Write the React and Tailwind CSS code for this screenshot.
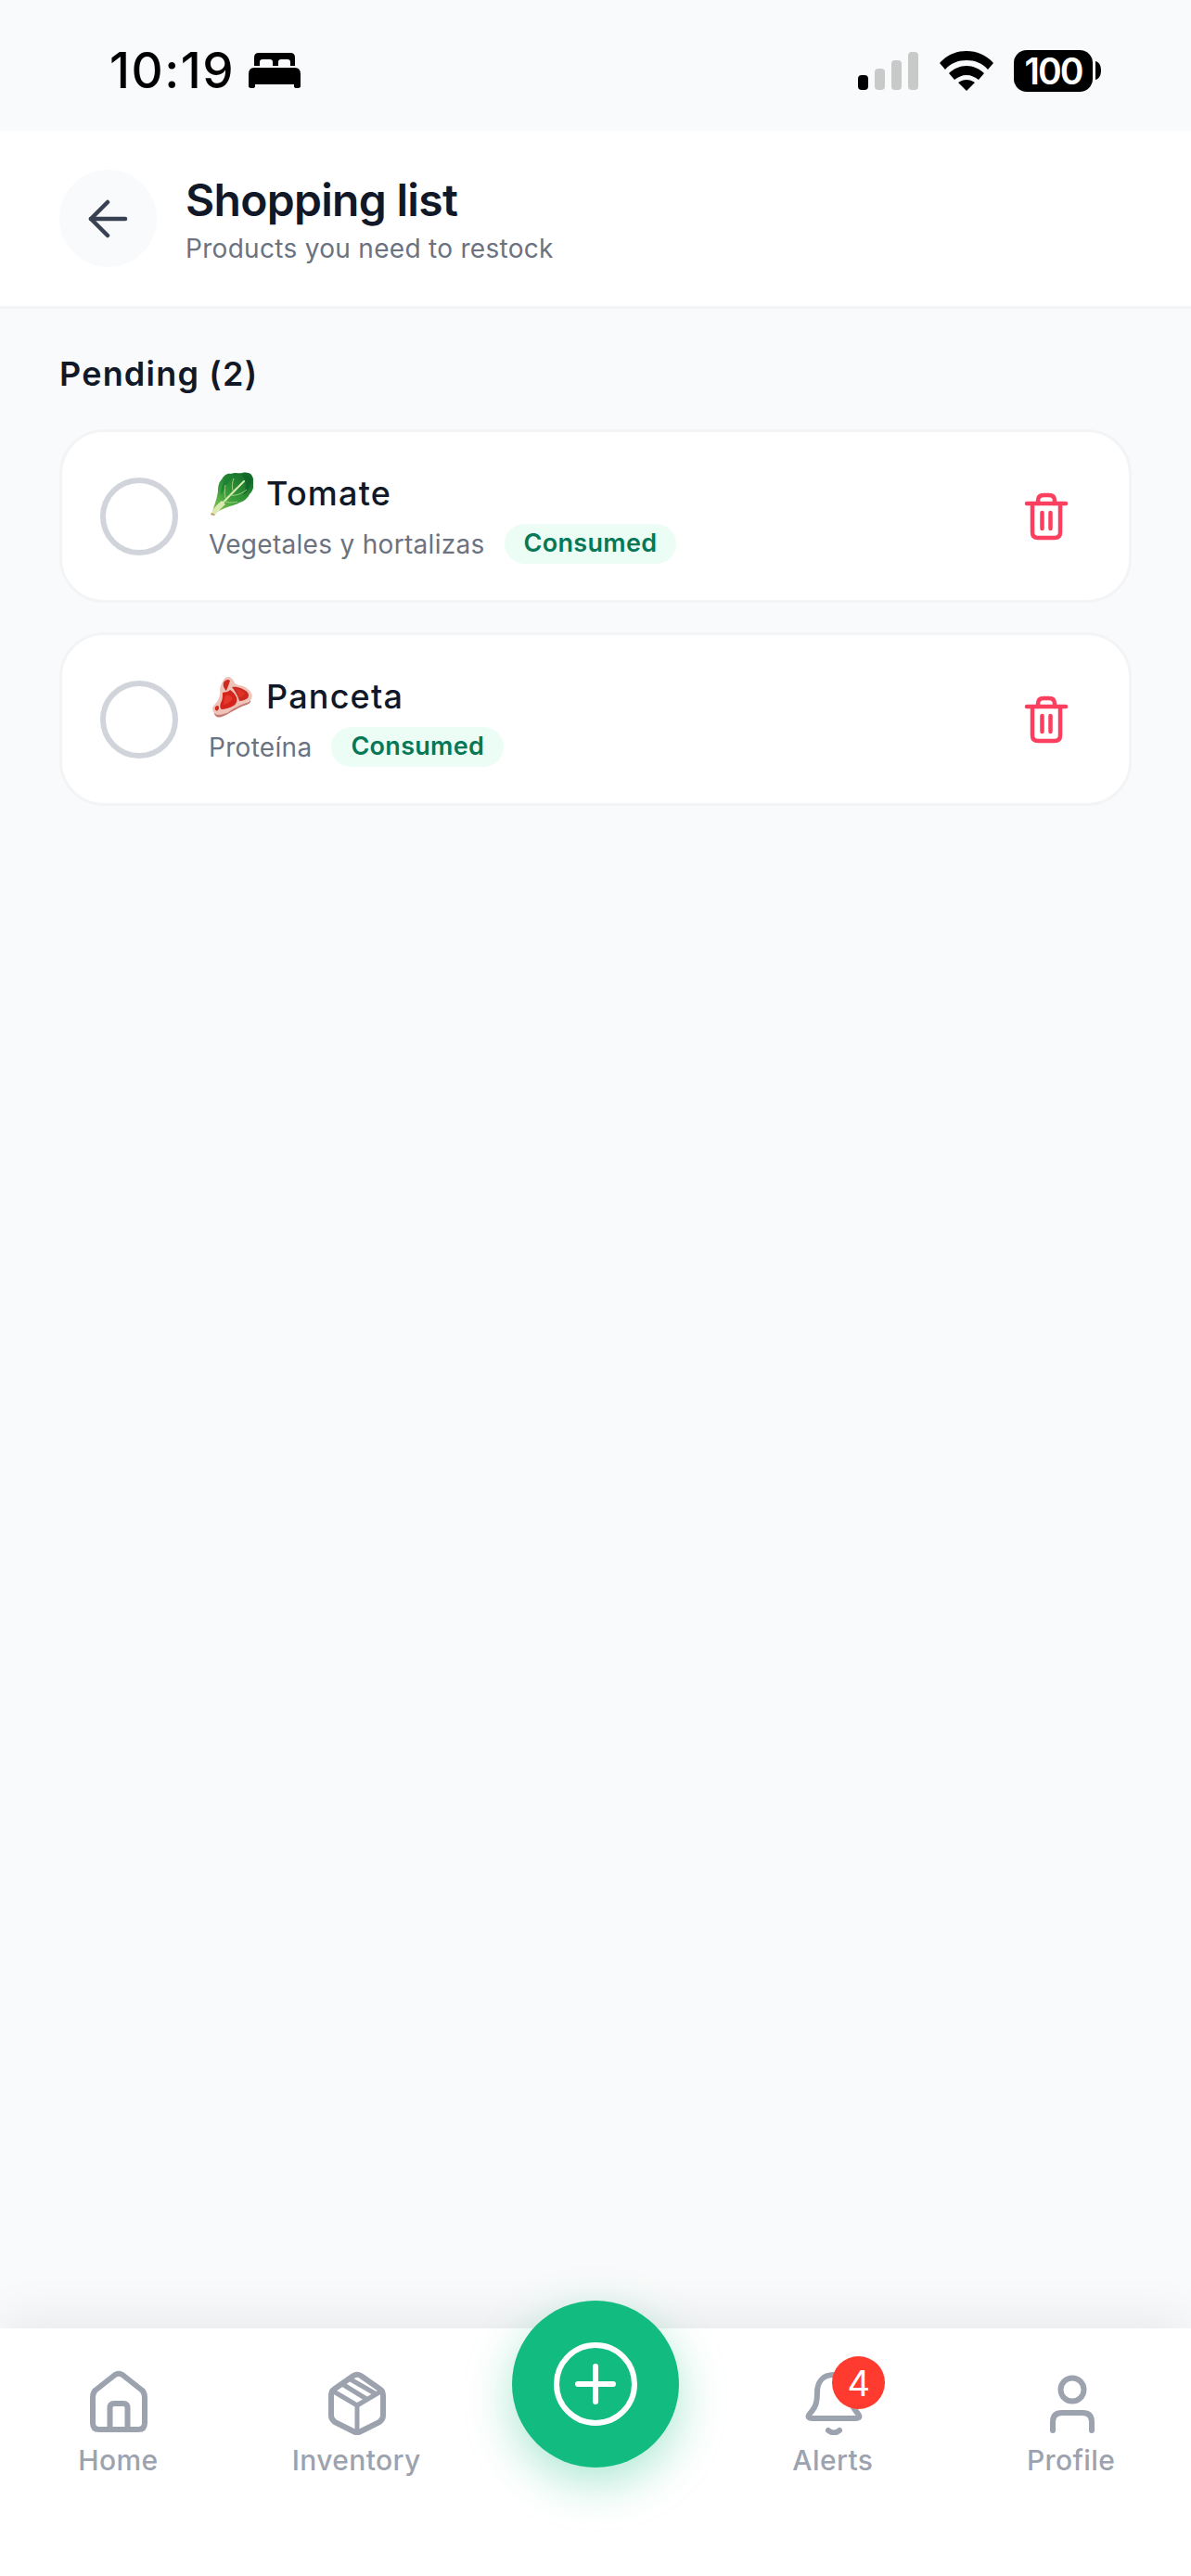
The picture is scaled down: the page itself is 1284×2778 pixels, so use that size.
const LeafEmoji = () => (
  <svg viewBox="0 0 48 48" className="w-[48px] h-[48px] shrink-0">
    <defs>
      <linearGradient id="leaf" x1="0.1" y1="1" x2="0.85" y2="0">
        <stop offset="0" stopColor="#8cc653" />
        <stop offset="0.4" stopColor="#3a9f3c" />
        <stop offset="1" stopColor="#12692a" />
      </linearGradient>
    </defs>
    <path
      d="M4 44 C6 36 9 30 10 22 C10 16 11 12 14 9 C16 5 20 2 24 3 C28 1 32 3 36 2 C40 1 45 2 46 4 C48 7 49 10 48 14 C49 18 47 22 44 25 C42 29 38 33 33 34 C29 37 24 37 20 39 C16 41 11 42 8 45 Z"
      fill="url(#leaf)"
    />
    <path d="M20 4 C15 10 14 18 13 26 C18 18 22 10 28 3 Z" fill="#1c7f33" opacity="0.8" />
    <path d="M36 4 C42 4 46 6 46 11 C45 17 43 22 37 26 C41 18 41 10 36 4 Z" fill="#0f6228" opacity="0.75" />
    <path d="M5 46 C12 37 22 27 38 11" stroke="#dcebb4" strokeWidth="2" fill="none" strokeLinecap="round" />
    <path d="M22 26 C29 27 35 25 41 20 M16 32 C22 35 27 34 31 33 M26 21 C25 17 25 13 27 8 M18 29 C17 24 17 20 18 15" stroke="#a9d684" strokeWidth="0.9" fill="none" />
    <path d="M3 45 C6 39 10 35 14 32 L18 36 C14 39 11 43 7 47 C5 48 3 47 3 45 Z" fill="#dbe9b0" />
    <path d="M3 45 L7 47 L6 48 L2 47 Z" fill="#b89a62" />
  </svg>
);

const MeatEmoji = () => (
  <svg viewBox="0 0 48 48" className="w-[48px] h-[48px] shrink-0">
    <path
      d="M15.700 6.700 C17 4 19 3 21 3 C24 3 26 5 28.300 10 C30 11 32 12 34.300 12.300 C37 13 40 14 41.700 15.700 C44 17 46 20 46.700 22.300 C47 25 46 27 45 28.300 C42 30 39 31 36.700 32.300 C34 34 31 35 28.300 36.700 C25 38 22 40 20 41.700 C17 43 14 45 11.700 45 C9 45 7 44 5.700 41.700 C4 40 4 37 4.300 35.700 C6 33 8 31 10 28.300 C11 26 12 23 12.300 20 C12 17 12 14 13.300 11.700 C14 10 15 8 15.700 6.700 Z"
      fill="#efc3b8"
    />
    <path d="M16 9 C18 6 21 5 23 7 C22 11 20 15 19 18 C17 16 15 13 16 9 Z" fill="#cf2a20" />
    <path d="M15 20 C18 19 20 20 23 17 C26 19 28 21 30 25 C31 28 30 32 27 34 C23 36 18 38 14 38 C12 37 12 34 13 31 C15 28 15 24 15 20 Z" fill="#d4241c" />
    <path d="M25 14 C30 13 36 15 40 18 C43 20 44 23 42 26 C39 28 36 29 33 29 C32 25 29 19 25 14 Z" fill="#cc2a20" />
    <path d="M18 23 C21 22 24 23 26 26 C24 30 20 32 16 33 C16 30 17 26 18 23 Z" fill="#e6372c" />
    <path d="M29 16 C33 16 37 18 39 21 C37 24 35 25 33 25 C32 22 31 19 29 16 Z" fill="#dd3327" />
    <path d="M7.500 35 C9 33 11 34 11 36 C11 39 9 40 7.500 39 C6.500 38 6.500 36 7.500 35 Z" fill="#cc2a20" />
    <path d="M5.700 41.700 C9 45 13 44 20 41.700 C25 38 31 35 36.700 32.300 C40 31 44 30 45 28.300 C46 30 44 32 41 33 C35 35 29 38 24 41 C19 44 14 47 10 46.500 C8 46 6 44 5.700 41.700 Z" fill="#c67b72" />
  </svg>
);

const TrashIcon = () => (
  <svg viewBox="0 0 56 56" fill="none" stroke="#fb3f5f" strokeWidth="4.5" strokeLinecap="round" strokeLinejoin="round" className="w-[56px] h-[56px] shrink-0">
    <path d="M7 14 H49" />
    <path d="M19 14 V11 Q19 5 25 5 H31 Q37 5 37 11 V14" />
    <path d="M13 14 V45 Q13 51 19 51 H37 Q43 51 43 45 V14" />
    <path d="M23.5 24 V41 M32.5 24 V41" />
  </svg>
);

const items = [
  { name: 'Tomate', category: 'Vegetales y hortalizas', emoji: <LeafEmoji /> },
  { name: 'Panceta', category: 'Proteína', emoji: <MeatEmoji /> },
];

const navIcon = 'w-[72px] h-[72px]';
const navStroke = { fill: 'none', stroke: '#9ca3af', strokeWidth: 6, strokeLinecap: 'round', strokeLinejoin: 'round' };

const tabs = [
  {
    label: 'Home',
    icon: (
      <svg viewBox="0 0 72 72" className={navIcon} {...navStroke}>
        <path d="M8 31 Q8 27 10.500 24 L32 7 Q36 4.500 40 7 L61.500 24 Q64 27 64 31 V59 Q64 66 57 66 H15 Q8 66 8 59 Z" />
        <path d="M26.500 66 V43 Q26.500 38 31 38 H41 Q45.500 38 45.500 43 V66" />
      </svg>
    ),
  },
  {
    label: 'Inventory',
    icon: (
      <svg viewBox="0 0 72 72" className={navIcon} {...navStroke}>
        <path d="M32 8 Q36 5.500 40 8 L60 22 Q64 25 64 29 V51 Q64 55 60 58 L40 68 Q36 70.500 32 68 L12 58 Q8 55 8 51 V29 Q8 25 12 22 Z" />
        <path d="M9 24 L36 40 L63 24" strokeWidth="5" />
        <path d="M36 40 V69" strokeWidth="5" />
        <path d="M29 12 L55 27 M20 17 L46 33" strokeWidth="5" />
      </svg>
    ),
  },
  null,
  {
    label: 'Alerts',
    badge: 4,
    icon: (
      <svg viewBox="0 0 72 72" className={navIcon} {...navStroke}>
        <path d="M36 7 C24 7 18 15 18 26 C18 38 16 42 10 49 Q6 54 13 54 H59 Q66 54 62 49 C56 42 54 38 54 26 C54 15 48 7 36 7 Z" />
        <path d="M30 67 Q36 72 42 67" />
      </svg>
    ),
  },
  {
    label: 'Profile',
    icon: (
      <svg viewBox="0 0 72 72" className={navIcon} {...navStroke}>
        <circle cx="36" cy="23" r="12.500" />
        <path d="M15 67 V58 Q15 48 25 48 H47 Q57 48 57 58 V67" />
      </svg>
    ),
  },
];

const StatusBar = () => (
  <div className="h-[141px] bg-[#f9fafb] flex items-center justify-between pl-[118px] pr-[97px] pt-[11px] text-black">
    <div className="flex items-center gap-[15px]">
      <span className="text-[53px] leading-none font-medium tracking-[1.500px]">10:19</span>
      <svg viewBox="0 0 56 40" className="w-[56px] h-[40px]" fill="#000">
        <path d="M11 1 H45 Q50 1 50 6 V15 H45 V11 Q45 8 42 8 H35 Q32 8 32 11 V15 H26 V11 Q26 8 23 8 H15 Q12 8 12 11 V15 H6 V6 Q6 1 11 1 Z" />
        <path d="M6 17 H50 Q56 17 56 24 V35 H0 V24 Q0 17 6 17 Z" />
        <path d="M0 35 H7 V37 Q7 39 4 39 Q0 39 0 37 Z M49 35 H56 V37 Q56 39 52 39 Q49 39 49 37 Z" />
      </svg>
    </div>
    <div className="flex items-center">
      <div className="flex items-end gap-[7px] mr-[23px]">
        <span className="w-[11px] h-[16px] rounded-[4px] bg-black" />
        <span className="w-[11px] h-[23px] rounded-[4px] bg-[#c8c9c9]" />
        <span className="w-[11px] h-[32px] rounded-[4px] bg-[#c8c9c9]" />
        <span className="w-[11px] h-[41px] rounded-[4px] bg-[#c8c9c9]" />
      </div>
      <svg viewBox="0 0 58 43" className="w-[58px] h-[43px] mr-[22px]" fill="#000">
        <path d="M29 0 C40 0 50 4 58 13 L52 20 C46 13 38 10 29 10 C20 10 12 13 6 20 L0 13 C8 4 18 0 29 0 Z" />
        <path d="M29 16 C36 16 43 19 48 24 L42 31 C38 28 34 26 29 26 C24 26 20 28 16 31 L10 24 C15 19 22 16 29 16 Z" />
        <path d="M29 31 C32 31 35 32 38 34 L29 43 L20 34 C23 32 26 31 29 31 Z" />
      </svg>
      <div className="w-[85px] h-[45px] rounded-[14px] bg-black text-white flex items-center justify-center text-[39px] leading-none font-semibold tracking-[-2px]">
        100
      </div>
      <svg viewBox="0 0 6 20" className="w-[6px] h-[20px] ml-[3px]" fill="#000">
        <path d="M0 0 C4 1 6 5 6 10 C6 15 4 19 0 20 Z" />
      </svg>
    </div>
  </div>
);

const App = () => {
  return (
    <div className="min-h-[2778px] flex flex-col bg-[#f9fafb] font-['Inter',sans-serif]">
      <StatusBar />

      {/* Header */}
      <header className="h-[192px] bg-white border-b-[3px] border-[#f3f4f6] flex items-center pl-[64px] gap-[31px]">
        <button className="w-[105px] h-[105px] rounded-full bg-[#f9fafb] flex items-center justify-center">
          <svg viewBox="0 0 48 48" fill="none" stroke="#374151" strokeWidth="4.500" strokeLinecap="round" strokeLinejoin="round" className="w-[48px] h-[48px]">
            <path d="M42 24 H5" />
            <path d="M23 6 L5 24 L23 42" />
          </svg>
        </button>
        <div className="flex flex-col gap-[6px]">
          <h1 className="text-[48px] leading-[58px] font-semibold tracking-[-0.7px] text-[#111827]">Shopping list</h1>
          <p className="text-[28px] leading-[34px] tracking-[0.3px] text-[#6b7280]">Products you need to restock</p>
        </div>
      </header>

      <main className="flex-1 px-[64px] pt-[48px]">
        <h2 className="text-[36px] leading-[44px] font-semibold tracking-[1.200px] text-[#111827] mb-[38px]">Pending (2)</h2>
        <div className="flex flex-col gap-[32px]">
          {items.map((item) => (
            <div key={item.name} className="h-[187px] rounded-[48px] bg-white border-[3px] border-[#f3f4f6] flex items-center pl-[41px] pr-[61px]">
              <span className="w-[84px] h-[84px] rounded-full border-[6px] border-[#d1d5db] shrink-0" />
              <div className="flex-1 ml-[33px] pt-[2px]">
                <div className="flex items-center gap-[14px] h-[50px]">
                  {item.emoji}
                  <span className="text-[36px] leading-[44px] font-medium tracking-[1.200px] text-[#111827]">{item.name}</span>
                </div>
                <div className="flex items-center gap-[21px] mt-[8px]">
                  <span className="text-[28px] leading-[34px] tracking-[0.3px] text-[#6b7280]">{item.category}</span>
                  <span className="h-[43px] px-[21px] rounded-full bg-[#ecfdf5] text-[#047857] text-[27px] font-semibold tracking-[0.3px] flex items-center">
                    Consumed
                  </span>
                </div>
              </div>
              <TrashIcon />
            </div>
          ))}
        </div>
      </main>

      {/* Bottom tabs */}
      <nav className="relative h-[267px] bg-white grid grid-cols-5 shadow-[0_-10px_50px_rgba(0,0,0,0.07)]">
        {tabs.map((tab) =>
          tab ? (
            <div key={tab.label} className="relative flex flex-col items-center pt-[43px]">
              {tab.icon}
              <span className="text-[30px] leading-[36px] font-medium text-[#9ca3af] tracking-[0.4px] mt-[9px] -ml-[2px]">{tab.label}</span>
              {tab.badge && (
                <span className="absolute top-[30px] left-[127px] w-[57px] h-[57px] rounded-full bg-[#ff3b30] text-white text-[38px] leading-none flex items-center justify-center">
                  {tab.badge}
                </span>
              )}
            </div>
          ) : (
            <div key="add" className="relative flex justify-center">
              <button className="absolute -top-[30px] w-[180px] h-[180px] rounded-full bg-[#12bb80] flex items-center justify-center shadow-[0_16px_50px_rgba(16,185,129,0.35)]">
                <svg viewBox="0 0 90 90" fill="none" stroke="#fff" strokeLinecap="round" className="w-[90px] h-[90px]">
                  <circle cx="45" cy="45" r="42" strokeWidth="6" />
                  <path d="M45 26 V64 M26 45 H64" strokeWidth="6" />
                </svg>
              </button>
            </div>
          )
        )}
      </nav>
    </div>
  );
};

export default App;
